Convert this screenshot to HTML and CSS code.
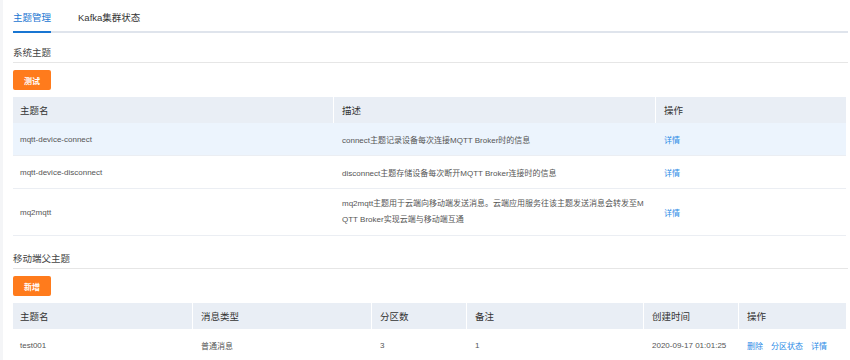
FILE: index.html
```html
<!DOCTYPE html>
<html lang="zh-CN">

<head>
	<meta charset="UTF-8">
	<title>主题管理</title>
	<link rel="stylesheet" href="styles.css">
</head>

<body>
	<div class="page">
		<div class="tabs">
			<span class="tab active">主题管理</span>
			<span class="tab">Kafka集群状态</span>
		</div>

		<div class="section-title">系统主题</div>
		<button class="btn">测试</button>
		<table class="grid sys">
			<colgroup>
				<col class="w-320">
				<col class="w-322">
				<col>
			</colgroup>
			<thead>
				<tr>
					<th>主题名</th>
					<th>描述</th>
					<th>操作</th>
				</tr>
			</thead>
			<tbody>
				<tr class="hover">
					<td>mqtt-device-connect</td>
					<td>connect主题记录设备每次连接MQTT Broker时的信息</td>
					<td><a class="link">详情</a></td>
				</tr>
				<tr>
					<td>mqtt-device-disconnect</td>
					<td>disconnect主题存储设备每次断开MQTT Broker连接时的信息</td>
					<td><a class="link">详情</a></td>
				</tr>
				<tr class="tall">
					<td>mq2mqtt</td>
					<td>
						<div class="desc">mq2mqtt主题用于云端向移动端发送消息。云端应用服务往该主题发送消息会转发至MQTT Broker实现云端与移动端互通</div>
					</td>
					<td><a class="link">详情</a></td>
				</tr>
			</tbody>
		</table>

		<div class="section-title">移动端父主题</div>
		<button class="btn">新增</button>
		<table class="grid">
			<colgroup>
				<col class="w-179">
				<col class="w-179">
				<col class="w-95">
				<col class="w-177">
				<col class="w-95">
				<col>
			</colgroup>
			<thead>
				<tr>
					<th>主题名</th>
					<th>消息类型</th>
					<th>分区数</th>
					<th>备注</th>
					<th>创建时间</th>
					<th>操作</th>
				</tr>
			</thead>
			<tbody>
				<tr>
					<td>test001</td>
					<td>普通消息</td>
					<td>3</td>
					<td>1</td>
					<td>2020-09-17 01:01:25</td>
					<td class="ops"><a class="link">删除</a><a class="link">分区状态</a><a class="link">详情</a></td>
				</tr>
			</tbody>
		</table>
	</div>
</body>

</html>
```

FILE: styles.css
```css
body {
	margin: 0;
	background-color: #f4f5f7;
	font-family: 'Liberation Sans', 'Noto Sans CJK SC', sans-serif;
	color: #333;
}

.page {
	margin-left: 3px;
	min-height: 360px;
	padding: 0 2px 0 10px;
	background-color: #fff;
}

.tabs {
	display: flex;
	gap: 27px;
	border-bottom: 2px solid #dfe4ec;
}

.tab {
	height: 27px;
	padding-top: 4px;
	line-height: 27px;
	font-size: 9.5px;
	color: #333;
	margin-bottom: -2px;
	border-bottom: 2px solid transparent;
}

.tab.active {
	color: #1976d2;
	border-bottom-color: #1976d2;
}

.section-title {
	margin-top: 9px;
	height: 18px;
	padding-top: 2px;
	line-height: 18px;
	font-size: 9.5px;
	color: #444;
	border-bottom: 1px solid #e6e6e6;
}

.grid + .section-title {
	margin-top: 12px;
}

.btn {
	display: block;
	width: 38px;
	height: 20px;
	margin-top: 7px;
	padding: 0;
	border: none;
	border-radius: 2px;
	background-color: #ff7b1c;
	color: #fff;
	font-family: inherit;
	font-size: 8px;
	font-weight: bold;
}

.grid {
	width: calc(100% - 2px);
	margin-top: 7px;
	table-layout: fixed;
	border-collapse: separate;
	border-spacing: 0;
}

.w-320 { width: 320px; }
.w-322 { width: 322px; }
.w-179 { width: 179px; }
.w-177 { width: 177px; }
.w-95 { width: 95px; }

.grid th {
	box-sizing: border-box;
	height: 26px;
	padding: 0 8px 0 7px;
	text-align: left;
	font-weight: normal;
	font-size: 9.5px;
	color: #333;
	background-color: #e9eef5;
}

.grid th + th {
	border-left: 1px solid #fff;
	padding-left: 8px;
}

.grid td {
	box-sizing: border-box;
	height: 33px;
	padding: 0 8px 0 7px;
	font-size: 8px;
	color: #555;
	border-bottom: 1px solid #ebeef3;
}

.grid td + td {
	padding-left: 9px;
}

.grid tr.hover td {
	background-color: #ecf4fd;
}

.grid tr.tall td {
	padding-top: 7px;
	padding-bottom: 7px;
}

.desc {
	width: 304px;
	line-height: 16px;
	word-break: break-all;
}

.link {
	color: #2b8be6;
	cursor: pointer;
}

.ops .link + .link {
	margin-left: 8px;
}
```
